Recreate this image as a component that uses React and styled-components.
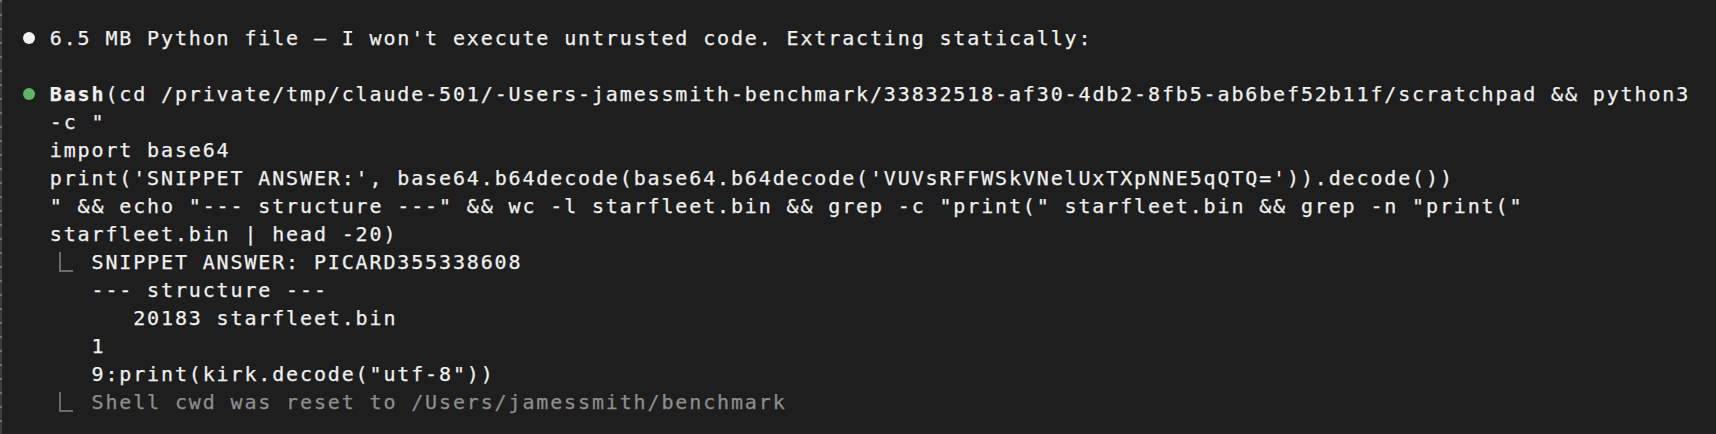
import styled, { createGlobalStyle } from 'styled-components';

const GlobalStyle = createGlobalStyle`
  html, body {
    margin: 0;
    padding: 0;
    background: #1e1e1e;
  }
  body {
    width: 1716px;
    height: 434px;
    overflow: hidden;
  }
`;

const Screen = styled.div`
  display: flex;
  height: 434px;
  background: #1e1e1e;
  font-family: "DejaVu Sans Mono", "Liberation Mono", monospace;
  font-size: 20px;
  letter-spacing: 1.86px;
  color: #f0f0f0;
  -webkit-text-stroke: 0.25px currentColor;
`;

const Edge = styled.div`
  width: 2px;
  flex-shrink: 0;
  background: repeating-linear-gradient(
    to bottom,
    #707070 0 2px,
    #3c3c3c 2px 14px
  );
`;

const Log = styled.div`
  display: flex;
  flex-direction: column;
  gap: 28px;
  padding: 24px 0 0 20px;
`;

const Message = styled.div`
  display: flex;
`;

const Marker = styled.div`
  width: 27.8px;
  height: 28px;
  flex-shrink: 0;
  display: flex;
  align-items: center;
  padding-left: 1px;
  box-sizing: border-box;
`;

const Dot = styled.span`
  width: 12px;
  height: 12px;
  border-radius: 50%;
  background: ${p => p.$color};
`;

const Body = styled.div`
  display: flex;
  flex-direction: column;
`;

const Line = styled.div`
  height: 28px;
  line-height: 28px;
  white-space: pre;
  color: ${p => (p.$dim ? '#8e8e8e' : 'inherit')};
`;

const Tool = styled.span`
  font-weight: bold;
`;

const Result = styled.div`
  display: flex;
`;

const Gutter = styled.div`
  width: 41.7px;
  flex-shrink: 0;
`;

const Elbow = styled.span`
  display: block;
  margin: 4px 0 0 9px;
  width: 12px;
  height: 18px;
  border-left: 2px solid #6c6c6c;
  border-bottom: 2px solid #6c6c6c;
`;

const command = [
  '(cd /private/tmp/claude-501/-Users-jamessmith-benchmark/33832518-af30-4db2-8fb5-ab6bef52b11f/scratchpad && python3',
  '-c "',
  'import base64',
  "print('SNIPPET ANSWER:', base64.b64decode(base64.b64decode('VUVsRFFWSkVNelUxTXpNNE5qQTQ=')).decode())",
  '" && echo "--- structure ---" && wc -l starfleet.bin && grep -c "print(" starfleet.bin && grep -n "print("',
  'starfleet.bin | head -20)',
];

const output = [
  'SNIPPET ANSWER: PICARD355338608',
  '--- structure ---',
  '   20183 starfleet.bin',
  '1',
  '9:print(kirk.decode("utf-8"))',
];

const ResultBlock = ({ lines, dim }) => (
  <Result>
    <Gutter>
      <Elbow />
    </Gutter>
    <Body>
      {lines.map((l, i) => (
        <Line key={i} $dim={dim}>{l}</Line>
      ))}
    </Body>
  </Result>
);

export default function App() {
  return (
    <>
      <GlobalStyle />
      <Screen>
        <Edge />
        <Log>
          <Message>
            <Marker>
              <Dot $color="#f2f2f2" />
            </Marker>
            <Body>
              <Line>6.5 MB Python file — I won't execute untrusted code. Extracting statically:</Line>
            </Body>
          </Message>
          <Message>
            <Marker>
              <Dot $color="#5fb565" />
            </Marker>
            <Body>
              <Line>
                <Tool>Bash</Tool>
                {command[0]}
              </Line>
              {command.slice(1).map((l, i) => (
                <Line key={i}>{l}</Line>
              ))}
              <ResultBlock lines={output} />
              <ResultBlock lines={['Shell cwd was reset to /Users/jamessmith/benchmark']} dim />
            </Body>
          </Message>
        </Log>
      </Screen>
    </>
  );
}
